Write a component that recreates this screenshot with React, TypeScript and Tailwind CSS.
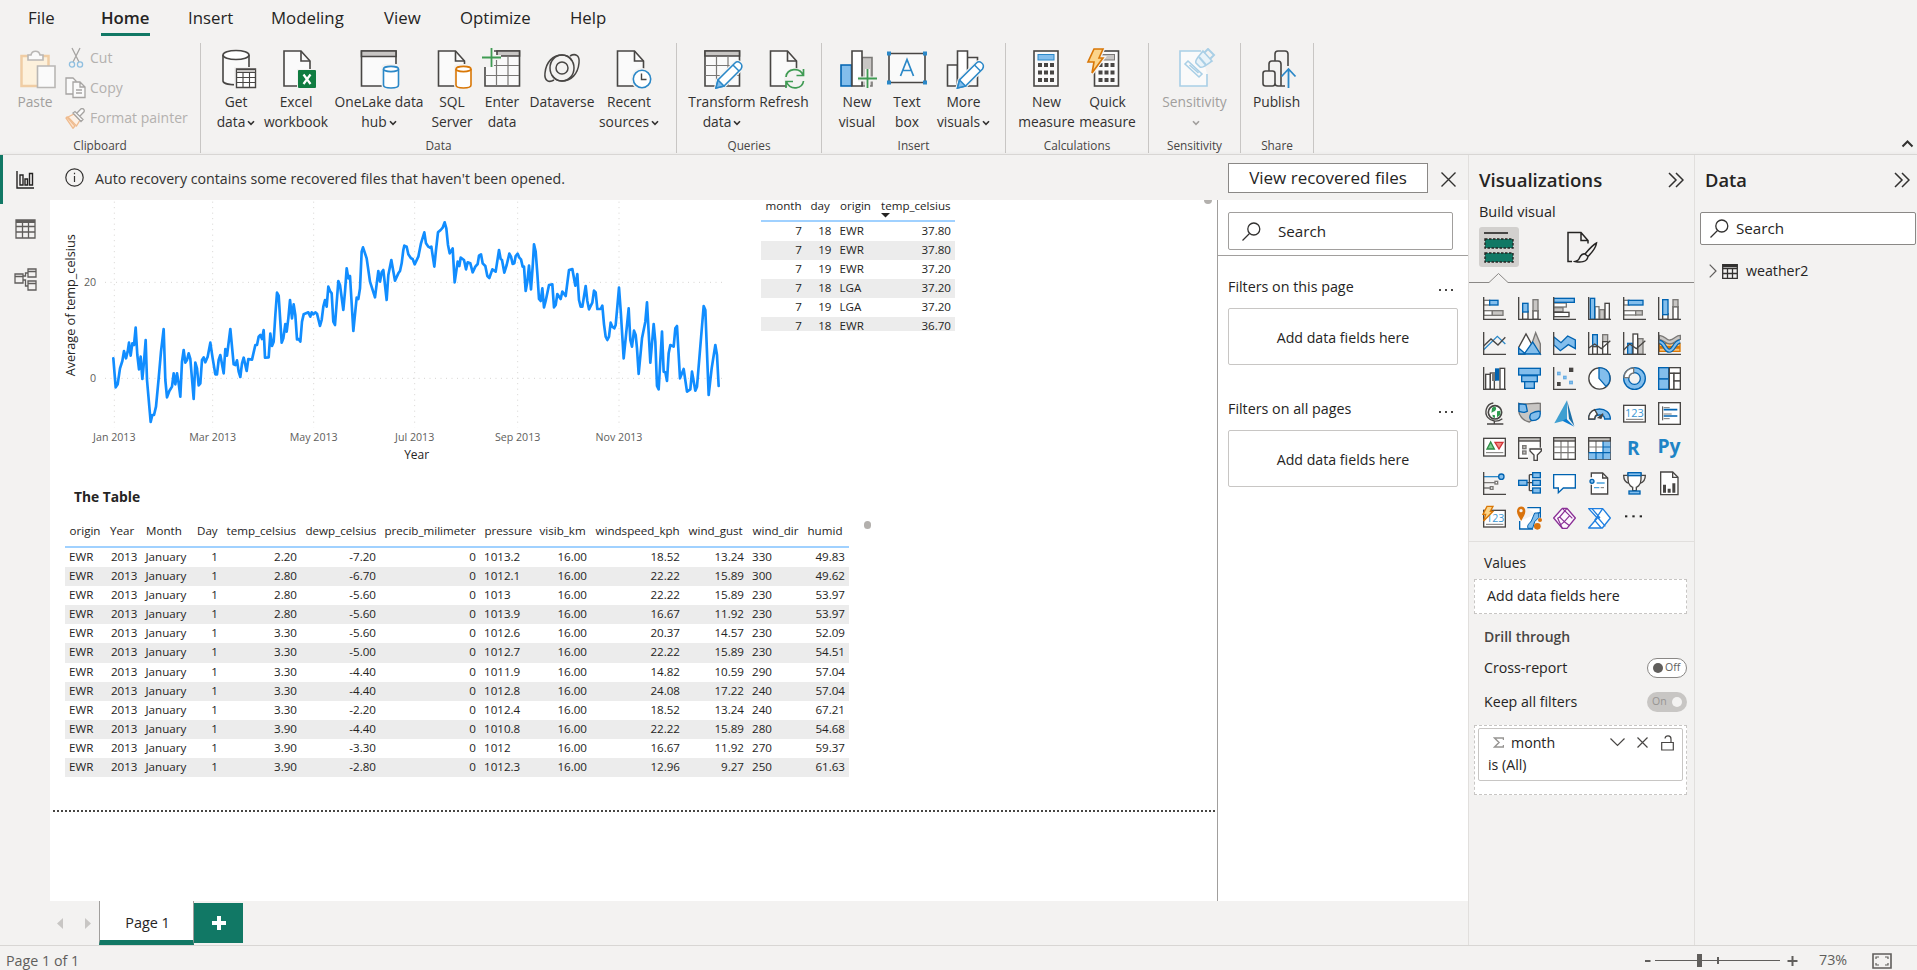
import React from "react";

type Kids = { children?: React.ReactNode };

const INK = "#484644";
const BLUE = "#2b88c8";
const FILL = "#83beec";
const DEEP = "#0063b1";
const GREY = "#7a7876";
const LGREY = "#c8c6c4";

/* ---------- ribbon ---------- */

function RibbonIcon({ x, w, children }: Kids & { x: number; w: number }) {
  return (
    <svg width={w} height={42} viewBox={`${x} 48 ${w} 42`} fill="none" stroke={INK} strokeWidth={1.6} className="block shrink-0">
      {children}
    </svg>
  );
}

function Caret({ dim }: { dim?: boolean }) {
  return (
    <svg width="8" height="6" viewBox="0 0 8 6" fill="none" stroke={dim ? "#a19f9d" : "#323130"} strokeWidth="1.6" className="ml-[2px] inline-block">
      <path d="M1 1.200 4 4.400 7 1.200" />
    </svg>
  );
}

function Item({ x, w, lines, caret, dim, children }: Kids & { x: number; w: number; lines: string[]; caret?: boolean; dim?: boolean }) {
  return (
    <div className="flex shrink-0 flex-col items-center" style={{ width: w }}>
      <RibbonIcon x={x} w={w}>{children}</RibbonIcon>
      <div className={`flex flex-col items-center pt-[2px] text-[13.800px] leading-[20px] whitespace-nowrap ${dim ? "text-[#a19f9d]" : "text-[#323130]"}`}>
        {lines.map((l, i) => (
          <span key={i} className="block h-[20px]">
            {l}
            {caret && i === lines.length - 1 && <Caret dim={dim} />}
          </span>
        ))}
      </div>
    </div>
  );
}

function Group({ w, pl, label, children }: Kids & { w: number; pl: number; label: string }) {
  return (
    <div className="flex h-[110px] shrink-0 flex-col border-r border-[#c8c6c4]" style={{ width: w }}>
      <div className="flex h-[95px] pt-[5px]" style={{ paddingLeft: pl }}>{children}</div>
      <div className="text-center text-[11.800px] leading-[16px] text-[#484644]">{label}</div>
    </div>
  );
}

function PageShape({ x }: { x: number }) {
  return (
    <>
      <path d={`M${x} 51h17l9 10v25h-26z`} fill="#fafafa" />
      <path d={`M${x + 17} 51v10h9`} />
    </>
  );
}

function Cylinder({ x, c }: { x: number; c: string }) {
  return (
    <g stroke={c}>
      <rect x={x - 2} y={64} width={20} height={25} rx={4} fill="#f3f2f1" stroke="none" />
      <path d={`M${x} 69v16c0 4 15 4 15 0v-16`} fill="#fff" />
      <ellipse cx={x + 7.5} cy={69} rx={7.5} ry={2.6} fill="#fff" />
    </g>
  );
}

function Pencil({ x }: { x: number }) {
  return (
    <g stroke={BLUE} strokeWidth={1.5}>
      <path d={`M${x} 88l2-8 17-17c3-3 9 1 6 6l-17 17z`} fill="#fff" stroke="#f3f2f1" strokeWidth={4} />
      <path d={`M${x} 88l2-8 17-17c3-3 9 1 6 6l-17 17z`} fill="#fff" />
      <path d={`M${x} 88l2-8 6 6z`} fill={FILL} />
      <path d={`M${x + 17} 65l6 6`} />
    </g>
  );
}

function Calculator({ x, screen, screenLine }: { x: number; screen: string; screenLine: string }) {
  return (
    <>
      <rect x={x} y={51} width={24} height={35} fill="#fafafa" />
      <rect x={x + 4} y={54.5} width={16} height={5.5} fill={screen} stroke={screenLine} strokeWidth={1} />
      {[63, 70.5, 78].map((y) => [4, 10, 16].map((d) => <rect key={`${y}-${d}`} x={x + d} y={y} width={4} height={4} fill={INK} stroke="none" />))}
    </>
  );
}

function Ribbon() {
  return (
    <div className="flex h-[111px]">
      <Group w={201} pl={8} label="Clipboard">
        <Item x={8} w={54} lines={["Paste"]} dim>
          <g strokeWidth={1.6}>
            <path d="M21.500 56h27v30h-27z" fill="#fdf1dc" stroke="#f0cda4" strokeWidth={2.500} />
            <path d="M28 60v-5h3c1-5 8-5 9 0h3v5z" fill="#fafafa" stroke="#b9b7b5" />
            <path d="M37.500 66h17.500v21.500h-17.500z" fill="#fafafa" stroke="#b9b7b5" />
          </g>
        </Item>
        <div className="-mt-[5px] flex flex-col text-[14px] leading-[30px] whitespace-nowrap text-[#b3b1af]">
          <div className="flex h-[30px] items-center gap-[4px] pl-[4px]">
            <svg width="20" height="22" viewBox="0 0 20 22" fill="none" stroke="#a6a4a2" strokeWidth="1.300">
              <path d="M6 1l7 14M14 1 7 15" />
              <circle cx="6" cy="17.500" r="2.600" stroke="#8fbfe0" />
              <circle cx="14" cy="17.500" r="2.600" stroke="#8fbfe0" />
            </svg>
            Cut
          </div>
          <div className="flex h-[30px] items-center gap-[4px] pl-[3px]">
            <svg width="21" height="22" viewBox="0 0 21 22" fill="#fafafa" stroke="#a6a4a2" strokeWidth="1.300">
              <path d="M1 1h7l3 3v13H1z" />
              <path d="M8 5h7l5 5v10.500H8zM15 5v5h5M11 13h6M11 16h6" />
            </svg>
            Copy
          </div>
          <div className="flex h-[30px] items-center gap-[4px] pl-[3px]">
            <svg width="21" height="21" viewBox="0 0 21 21" fill="#fafafa" stroke="#a6a4a2" strokeWidth="1.300">
              <path d="M2 9l8 9-2 2.300L1 10z" stroke="#efbb8e" fill="#fbe3cd" />
              <path d="M3 9l6-3 6 6-3.500 6z" stroke="#efbb8e" fill="#fdf1e6" />
              <path d="M8 5l2-1.500 8 8L16 13.500zM12 5l4-4.200c2-1 4 1 3 3L15 8" />
            </svg>
            Format painter
          </div>
        </div>
      </Group>
      <Group w={476} pl={7} label="Data">
        <Item x={208} w={56} lines={["Get", "data"]} caret>
          <path d="M223 55v26c0 5 26 5 26 0V55" fill="#fafafa" />
          <ellipse cx={236} cy={55} rx={13} ry={4.500} fill="#fff" />
          <path d="M234 67h24v23h-24z" fill="#f3f2f1" stroke="none" />
          <path d="M236.500 69h19v18.500h-19z" fill="#fff" strokeWidth={1.400} />
          <path d="M236.500 69.500h19v3h-19z" fill={LGREY} strokeWidth={1} />
          <path d="M243 73v14M249.500 73v14M237 77.500h18M237 82.500h18" strokeWidth={1.100} />
        </Item>
        <Item x={264} w={64} lines={["Excel", "workbook"]}>
          <PageShape x={284} />
          <rect x={297} y={69} width={20} height={20} fill="#f3f2f1" stroke="none" />
          <rect x={298} y={70} width={18} height={18} rx={1} fill="#107c41" stroke="none" />
          <path d="M303.500 74.500l7 9.500M310.500 74.500l-7 9.500" stroke="#fff" strokeWidth={2.200} />
        </Item>
        <Item x={328} w={102} lines={["OneLake data", "hub"]} caret>
          <path d="M361.500 51h34.500v35h-34.500z" fill="#fafafa" />
          <path d="M361.500 51h34.500v5.500h-34.500z" fill={LGREY} />
          <Cylinder x={383.500} c={BLUE} />
        </Item>
        <Item x={430} w={44} lines={["SQL", "Server"]}>
          <PageShape x={438.500} />
          <Cylinder x={456} c="#d97706" />
        </Item>
        <Item x={474} w={56} lines={["Enter", "data"]}>
          <path d="M485 51h34.500v35H485z" fill="#fafafa" />
          <path d="M497 51h22.500v5H497z" fill={LGREY} />
          <path d="M496.500 56v30M508 56v30M485 65.500h34M485 75.500h34" stroke={GREY} strokeWidth={1.200} />
          <path d="M480 48h14v19h-14z" fill="#f3f2f1" stroke="none" />
          <path d="M491.500 48v19M482 57.500h19" stroke="#f3f2f1" strokeWidth={5} />
          <path d="M491.500 48v19M482 57.500h19" stroke="#3f9b53" strokeWidth={1.800} />
        </Item>
        <Item x={530} w={64} lines={["Dataverse"]}>
          <path d="M554 80c-5 3-10 1-9-7 1-11 8-18 17-18 7 0 12 6 12 13s-5 13-12 13c-4 0-8-2-10-6" strokeWidth={1.500} />
          <path d="M570 56c5-3 10-1 9 7-1 11-8 18-17 18-7 0-12-6-12-13s5-13 12-13c4 0 8 2 10 6" strokeWidth={1.500} />
          <circle cx={562} cy={68} r={6} strokeWidth={1.500} />
        </Item>
        <Item x={594} w={70} lines={["Recent", "sources"]} caret>
          <PageShape x={617.500} />
          <circle cx={642} cy={79} r={11} fill="#f3f2f1" stroke="none" />
          <circle cx={642} cy={79} r={8.700} fill="#fff" stroke={BLUE} />
          <path d="M641.500 73.500v6h5" strokeWidth={1.400} />
        </Item>
      </Group>
      <Group w={145} pl={9} label="Queries">
        <Item x={686} w={72} lines={["Transform", "data"]} caret>
          <path d="M705 51h34.500v35H705z" fill="#fafafa" />
          <path d="M705 51h34.500v5H705z" fill={LGREY} />
          <path d="M716.500 56v30M728 56v30M705 65.500h34M705 75.500h34" stroke={GREY} strokeWidth={1.200} />
          <Pencil x={716} />
        </Item>
        <Item x={758} w={52} lines={["Refresh"]}>
          <PageShape x={770.500} />
          <circle cx={795} cy={79} r={11} fill="#f3f2f1" stroke="none" />
          <path d="M786 77c1-9 14-10 17-2M803.500 69v6.500h-7M803.500 81c-1 8-13 10-17 1M786 88v-6.500h7" stroke="#3f9b53" strokeWidth={1.700} />
        </Item>
      </Group>
      <Group w={184} pl={8} label="Insert">
        <Item x={830} w={54} lines={["New", "visual"]}>
          <path d="M841 65h10.500v21H841z" fill={FILL} stroke={DEEP} />
          <path d="M862 57.500h10V86h-10z" fill={LGREY} stroke={GREY} />
          <path d="M852 51h10v35h-10z" fill="#fff" />
          <path d="M867.500 69v20M858 79h19" stroke="#f3f2f1" strokeWidth={5} />
          <path d="M867.500 69v19M858 78.500h19" stroke="#3f9b53" strokeWidth={1.800} />
        </Item>
        <Item x={884} w={46} lines={["Text", "box"]}>
          <path d="M889 53.500h36v29h-36z" fill="#fafafa" />
          <path d="M900.500 76l6.500-16.500 6.500 16.500M903 70.500h8" stroke={BLUE} strokeWidth={1.700} />
          {[887, 923].map((x) => [51.500, 80.500].map((y) => <rect key={`${x}${y}`} x={x} y={y} width={4} height={4} fill={BLUE} stroke="none" />))}
        </Item>
        <Item x={930} w={67} lines={["More", "visuals"]} caret>
          <path d="M947.500 65h10v21h-10zM967 57.500h10.500V86H967z" fill="#fafafa" />
          <path d="M957.500 51h10v35h-10z" fill="#fff" />
          <Pencil x={957.500} />
        </Item>
      </Group>
      <Group w={143} pl={10} label="Calculations">
        <Item x={1016} w={61} lines={["New", "measure"]}>
          <Calculator x={1034} screen={FILL} screenLine={BLUE} />
        </Item>
        <Item x={1077} w={61} lines={["Quick", "measure"]}>
          <Calculator x={1094.500} screen={LGREY} screenLine={GREY} />
          <path d="M1094 49h9l-4 9h4l-11 15 2-11h-6z" fill="#fbd58b" stroke="#f3f2f1" strokeWidth={4} />
          <path d="M1094 49h9l-4 9h4l-11 15 2-11h-6z" fill="#fbd58b" stroke="#d97706" />
        </Item>
      </Group>
      <Group w={92} pl={10} label="Sensitivity">
        <Item x={1159} w={71} lines={["Sensitivity", ""]} caret dim>
          <g stroke="#a9cfe6">
            <path d="M1207 74v12h-27V51h21" fill="#fafafa" />
            <path d="M1185 64l3-3 14 13-3 3zM1189.500 65l9 8" />
            <path d="M1196 63c-2-3 5-9 7-12l9 10c-3 2-10 8-12 6z" fill="#e9f3f9" />
            <path d="M1204 53l4-4 6 6-4 4M1199 57l7 8" strokeWidth={2} />
          </g>
        </Item>
      </Group>
      <Group w={73} pl={7} label="Share">
        <Item x={1248} w={57} lines={["Publish"]}>
          <path d="M1275 61V54q0-3 3-3h7q3 0 3 3v13M1269 71v-7q0-3 3-3h6q3 0 3 3v22" />
          <rect x={1263} y={71} width={12} height={15} rx={2.500} />
          <path d="M1275 83.500q0 2.500 3 2.500h7" />
          <path d="M1288.500 66v23" stroke="#f3f2f1" strokeWidth={5} />
          <path d="M1288.500 88V69M1281.500 76.500l7-7.500 7 7.500" stroke={BLUE} strokeWidth={1.800} />
        </Item>
      </Group>
      <div className="flex flex-1 items-end justify-end pr-[3px] pb-[6px]">
        <svg width="13" height="8" viewBox="0 0 13 8" fill="none" stroke="#323130" strokeWidth="2">
          <path d="M1.500 6.500l5-5 5 5" />
        </svg>
      </div>
    </div>
  );
}

function Tabs() {
  const tabs: [string, number][] = [["File", 73], ["Home", 87], ["Insert", 83], ["Modeling", 113], ["View", 76], ["Optimize", 110], ["Help", 60]];
  return (
    <div className="flex h-[43px] pl-[28px] text-[16.800px] leading-[35px] text-[#252423]">
      {tabs.map(([t, w]) => (
        <div key={t} style={{ width: w }}>
          <span className={t === "Home" ? "inline-block h-[36px] border-b-[3px] border-[#117865] leading-[35px] font-semibold" : ""}>{t}</span>
        </div>
      ))}
    </div>
  );
}

/* ---------- report canvas ---------- */

const LINE =
  "190,490 197,577 203,568 210,520 217,498 222,468 228,490 233,470 237,443 242,482 247,445 252,450 257,398 262,480 267,523 272,485 277,552 282,500 287,435 291,555 302,681 307,660 312,660 318,635 326,550 333,470 341,402 346,555 351,607 358,588 366,575 371,535 376,568 381,535 386,565 391,605 396,500 401,465 406,503 411,495 416,475 421,492 431,612 436,503 441,520 446,571 451,565 456,495 461,487 466,502 473,485 481,443 488,490 496,538 501,538 506,495 511,480 521,535 526,462 531,482 541,402 551,508 556,510 561,496 566,530 571,546 576,505 581,488 590,528 595,492 606,494 616,450 621,450 626,425 631,420 636,432 641,405 645,488 656,487 661,416 666,453 671,440 676,360 681,293 686,302 695,443 700,430 706,387 710,410 715,370 720,315 726,370 731,328 736,360 741,433 746,432 751,440 756,380 761,358 775,352 781,365 785,352 790,358 796,352 801,356 810,393 815,375 820,335 825,315 830,335 835,275 840,288 845,295 850,380 855,390 865,258 870,270 880,345 885,290 890,220 895,250 900,243 910,408 920,308 925,312 930,280 935,170 939,157 950,190 960,260 975,307 985,228 990,260 995,232 1000,225 1010,315 1015,240 1024,195 1035,257 1045,235 1050,228 1055,205 1060,165 1063,152 1070,155 1075,178 1083,190 1088,192 1094,208 1105,185 1113,145 1123,112 1128,145 1135,155 1140,158 1144,155 1153,215 1158,165 1164,112 1172,105 1178,98 1184,82 1189,100 1194,150 1199,175 1208,160 1214,262 1223,200 1228,213 1232,188 1242,195 1248,223 1253,202 1261,205 1268,232 1276,215 1283,207 1287,182 1293,178 1298,205 1306,213 1312,243 1318,249 1327,223 1337,230 1347,165 1352,192 1356,195 1363,233 1370,210 1378,176 1383,185 1388,207 1393,205 1397,183 1403,176 1408,188 1413,193 1418,215 1422,215 1427,288 1432,260 1437,212 1443,283 1448,215 1452,148 1457,170 1462,235 1467,312 1472,318 1477,280 1482,337 1487,318 1497,270 1507,268 1512,337 1517,330 1522,297 1532,312 1537,290 1547,303 1557,225 1567,222 1576,272 1582,237 1587,315 1592,335 1597,335 1607,273 1612,318 1617,343 1627,323 1632,287 1637,292 1642,342 1652,342 1657,332 1662,388 1667,425 1672,435 1677,425 1682,383 1687,395 1693,400 1697,390 1702,335 1707,278 1712,345 1721,490 1736,340 1741,435 1746,455 1752,407 1757,420 1761,460 1766,537 1776,430 1786,380 1791,322 1801,503 1811,387 1816,440 1821,573 1826,583 1836,410 1841,530 1846,532 1851,558 1856,475 1861,450 1871,455 1876,400 1881,393 1890,550 1901,522 1911,590 1921,583 1926,530 1936,587 1941,575 1961,333 1966,345 1976,600 1985,520 1996,450 2001,480 2006,573";

function TempChart() {
  const months: [number, string][] = [[193, "Jan 2013"], [488, "Mar 2013"], [791, "May 2013"], [1094, "Jul 2013"], [1403, "Sep 2013"], [1707, "Nov 2013"]];
  return (
    <svg width="711" height="265" viewBox="0 15 2133 795" className="block shrink-0">
      <g stroke="#d6d4d2" strokeWidth="3" strokeDasharray="3 13.500">
        {months.map(([x]) => <path key={x} d={`M${x} 20V697`} />)}
        <path d="M165 262H2026M165 550H2026" />
      </g>
      <polyline points={LINE} fill="none" stroke="#118dff" strokeWidth="8" strokeLinejoin="round" strokeLinecap="round" />
      <g fill="#605e5c" fontSize="32" textAnchor="middle">
        {months.map(([x, t]) => <text key={t} x={x} y="738">{t}</text>)}
        <text x="120" y="272">20</text>
        <text x="129" y="561">0</text>
      </g>
      <g fill="#252423" textAnchor="middle">
        <text x="1100" y="791" fontSize="36">Year</text>
        <text transform="translate(75 331) rotate(-90)" fontSize="38">Average of temp_celsius</text>
      </g>
    </svg>
  );
}

type Col = { name: string; w: number; left?: boolean };

function DataTable({ cols, rows, cut }: { cols: Col[]; rows: string[][]; cut?: boolean }) {
  return (
    <>
      {rows.map((r, i) => (
        <div key={i} className={`flex ${cut && i === rows.length - 1 ? "h-[14px]" : "h-[19.1px]"} ${i % 2 ? "bg-[#ececec]" : "bg-white"}`}>
          {r.map((v, j) => (
            <div key={j} style={{ width: cols[j].w }} className={`shrink-0 pr-[4px] pl-[4px] text-[11.600px] leading-[18px] whitespace-nowrap text-[#252423] ${cols[j].left ? "text-left" : "text-right"}`}>
              {v}
            </div>
          ))}
        </div>
      ))}
    </>
  );
}

function HeaderRow({ cols }: { cols: Col[] }) {
  return (
    <div className="flex text-[11.600px] leading-[16px] text-[#252423]">
      {cols.map((c) => (
        <div key={c.name} style={{ width: c.w }} className="shrink-0 pl-[4.500px] whitespace-nowrap">{c.name}</div>
      ))}
    </div>
  );
}

const TOP_COLS: Col[] = [{ name: "month", w: 45 }, { name: "day", w: 29.500 }, { name: "origin", w: 41, left: true }, { name: "temp_celsius", w: 78.500 }];
const TOP_ROWS = [
  ["7", "18", "EWR", "37.80"],
  ["7", "19", "EWR", "37.80"],
  ["7", "19", "EWR", "37.20"],
  ["7", "18", "LGA", "37.20"],
  ["7", "19", "LGA", "37.20"],
  ["7", "18", "EWR", "36.70"],
];

const MAIN_COLS: Col[] = [
  { name: "origin", w: 40.500, left: true },
  { name: "Year", w: 36 },
  { name: "Month", w: 51, left: true },
  { name: "Day", w: 29.500 },
  { name: "temp_celsius", w: 79 },
  { name: "dewp_celsius", w: 79 },
  { name: "precib_milimeter", w: 100 },
  { name: "pressure", w: 55, left: true },
  { name: "visib_km", w: 56 },
  { name: "windspeed_kph", w: 93 },
  { name: "wind_gust", w: 64 },
  { name: "wind_dir", w: 55, left: true },
  { name: "humid", w: 46 },
];
const MAIN_ROWS = [
  ["2.20", "-7.20", "1013.2", "18.52", "13.24", "330", "49.83"],
  ["2.80", "-6.70", "1012.1", "22.22", "15.89", "300", "49.62"],
  ["2.80", "-5.60", "1013", "22.22", "15.89", "230", "53.97"],
  ["2.80", "-5.60", "1013.9", "16.67", "11.92", "230", "53.97"],
  ["3.30", "-5.60", "1012.6", "20.37", "14.57", "230", "52.09"],
  ["3.30", "-5.00", "1012.7", "22.22", "15.89", "230", "54.51"],
  ["3.30", "-4.40", "1011.9", "14.82", "10.59", "290", "57.04"],
  ["3.30", "-4.40", "1012.8", "24.08", "17.22", "240", "57.04"],
  ["3.30", "-2.20", "1012.4", "18.52", "13.24", "240", "67.21"],
  ["3.90", "-4.40", "1010.8", "22.22", "15.89", "280", "54.68"],
  ["3.90", "-3.30", "1012", "16.67", "11.92", "270", "59.37"],
  ["3.90", "-2.80", "1012.3", "12.96", "9.27", "250", "61.63"],
].map((r) => ["EWR", "2013", "January", "1", r[0], r[1], "0", r[2], "16.00", r[3], r[4], r[5], r[6]]);

function Canvas() {
  return (
    <div className="flex w-[1167px] shrink-0 flex-col bg-white">
      <div className="flex h-[265px]">
        <TempChart />
        <div className="w-[194px]">
          <div className="h-[22px]">
            <div className="-mt-[2px]"><HeaderRow cols={TOP_COLS} /></div>
            <svg width="9" height="5" viewBox="0 0 9 5" className="-mt-px ml-[119.500px] block"><path d="M0 0h9L4.500 4.500z" fill="#252423" /></svg>
          </div>
          <div className="h-[2px] bg-[#a0d1ff]" />
          <DataTable cols={TOP_COLS} rows={TOP_ROWS} cut />
        </div>
        <div className="h-[4px] flex-1 overflow-hidden">
          <div className="mt-[-4px] mr-[5px] ml-auto h-[8px] w-[8px] rounded-full bg-[#b3b0ad]" />
        </div>
      </div>
      <div className="pt-[22px] pl-[24px] text-[13.800px] leading-[20px] font-bold text-[#252423]">The Table</div>
      <div className="flex pt-[16px] pl-[15px]">
        <div className="w-[784px] shrink-0">
          <HeaderRow cols={MAIN_COLS} />
          <div className="mt-[7px] h-[2px] bg-[#a0d1ff]" />
          <DataTable cols={MAIN_COLS} rows={MAIN_ROWS} />
        </div>
        <div className="mt-[-2px] ml-[15px] h-[8px] w-[7px] rounded-full bg-[#b3b0ad]" />
      </div>
      <div className="mt-[33.300px] mr-[2px] ml-[3px] border-t-2 border-dotted border-[#484644]" />
    </div>
  );
}

/* ---------- filter pane ---------- */

function Magnifier() {
  return (
    <svg width="19" height="19" viewBox="0 0 19 19" fill="none" stroke="#323130" strokeWidth="1.300">
      <circle cx="11.800" cy="7" r="6" />
      <path d="M7.500 11.500.5 18.500" />
    </svg>
  );
}

function FilterPane() {
  const section = (t: string) => (
    <>
      <div className="flex h-[20px] items-center justify-between text-[14.300px] leading-[20px] text-[#252423]">
        <span>{t}</span>
        <svg width="14" height="3" viewBox="0 0 14 3" className="mt-[6px] mr-[5px]" fill="#484644">
          <rect x="0" y="0" width="2" height="2" /><rect x="6" y="0" width="2" height="2" /><rect x="12" y="0" width="2" height="2" />
        </svg>
      </div>
      <div className="mt-[11px] flex h-[57px] items-center justify-center rounded-[2px] border border-[#c8c6c4] pt-[2px] text-[14.200px] text-[#252423]">Add data fields here</div>
    </>
  );
  return (
    <div className="flex w-[251px] flex-col border-l border-[#a19f9d] bg-white">
      <div className="border-b border-[#a19f9d] pt-[12px] pr-[15px] pb-[5px] pl-[10px]">
        <div className="flex h-[38px] items-center rounded-[2px] border border-[#a19f9d] pl-[13px] text-[15.200px] text-[#252423]">
          <Magnifier />
          <span className="ml-[17px]">Search</span>
        </div>
      </div>
      <div className="flex flex-col pt-[21px] pr-[10px] pl-[10px]">
        {section("Filters on this page")}
        <div className="h-[34px]" />
        {section("Filters on all pages")}
      </div>
    </div>
  );
}

/* ---------- visualization gallery, 69-unit grid per glyph ---------- */

const axis = <path d="M2 0v67h67" stroke={INK} strokeWidth={4} fill="none" />;
const wht = "#fff";
const R = (x: number, y: number, w: number, h: number, f: string, s: string, k?: number) => (
  <rect key={k} x={x} y={y} width={w} height={h} fill={f} stroke={s} strokeWidth={4} />
);

const GLYPHS: React.ReactNode[] = [
  <>{R(2, 10, 18, 14, wht, GREY)}{R(20, 10, 25, 14, FILL, DEEP)}{R(2, 41, 26, 14, wht, GREY)}{R(28, 41, 32, 14, LGREY, GREY)}{axis}</>,
  <>{R(14, 43, 16, 24, wht, INK)}{R(14, 19, 16, 26, FILL, DEEP)}{R(45, 41, 15, 26, wht, INK)}{R(45, 8, 15, 33, LGREY, GREY)}{axis}</>,
  <>{R(2, 18, 38, 12, wht, GREY)}{R(2, 32, 28, 12, LGREY, GREY)}{R(2, 46, 46, 13, wht, INK)}{R(2, 4, 62, 12, FILL, DEEP)}{axis}</>,
  <>{R(21, 29, 12, 38, wht, GREY)}{R(35, 38, 14, 29, LGREY, GREY)}{R(51, 19, 13, 48, wht, INK)}{R(7, 4, 13, 63, FILL, DEEP)}{axis}</>,
  <>{R(2, 10, 16, 14, wht, GREY)}{R(16, 10, 44, 14, FILL, DEEP)}{R(2, 41, 36, 13, wht, GREY)}{R(38, 41, 20, 13, LGREY, GREY)}{axis}</>,
  <>{R(14, 50, 16, 17, wht, INK)}{R(14, 8, 16, 45, FILL, DEEP)}{R(45, 29, 15, 38, wht, INK)}{R(45, 8, 15, 21, LGREY, GREY)}{axis}</>,
  <><path d="M2 53 43 13l24 23" stroke={BLUE} strokeWidth={4} fill="none" /><path d="M2 42 24 21l21 18L67 16" stroke={INK} strokeWidth={4} fill="none" />{axis}</>,
  <><path d="M2 66V46L24 6l21 38-24 22z" fill={wht} stroke={INK} strokeWidth={4} /><path d="M53 2 67 36v30L40 40z" fill={LGREY} stroke={GREY} strokeWidth={4} /><path d="M2 48 20 64l24-34 23 36H2z" fill={FILL} stroke={DEEP} strokeWidth={4} /></>,
  <><path d="M2 14 24 32 44 12 67 24V50L46 38 22 56 2 38z" fill={FILL} stroke={DEEP} strokeWidth={4} />{axis}</>,
  <>{R(14, 8, 14, 46, FILL, DEEP)}{R(14, 44, 14, 23, wht, INK)}{R(44, 8, 15, 22, LGREY, GREY)}{R(44, 29, 15, 38, wht, INK)}<path d="M2 48 20 36l20 14L67 26" stroke={INK} strokeWidth={4} fill="none" />{axis}</>,
  <>{R(14, 34, 14, 33, FILL, DEEP)}{R(44, 20, 16, 47, LGREY, GREY)}{R(30, 6, 14, 61, wht, INK)}<path d="M2 54 20 36l20 14L67 26" stroke={INK} strokeWidth={4} fill="none" />{axis}</>,
  <><path d="M4 34h62v10H4zM4 48h62v10H4z" fill="#f8c27a" stroke="#d97706" strokeWidth={4} /><path d="M4 10c20 2 20 16 32 14S54 10 67 10v12c-14 2-18 14-31 14S16 24 4 22z" fill={LGREY} stroke={GREY} strokeWidth={4} /><path d="M4 30c16 0 16 26 30 26s14-24 32-28" stroke={DEEP} strokeWidth={13} fill="none" /><path d="M4 30c16 0 16 26 30 26s14-24 32-28" stroke={FILL} strokeWidth={6} fill="none" />{axis}</>,
  <>{R(8, 22, 14, 45, wht, INK)}{R(22, 18, 12, 49, wht, INK)}{R(29, 20, 9, 20, GREY, GREY)}{R(38, 6, 9, 33, DEEP, DEEP)}{R(51, 4, 14, 63, wht, INK)}{axis}</>,
  <>{R(2, 4, 65, 20, FILL, DEEP)}{R(11, 26, 47, 18, FILL, DEEP)}{R(20, 44, 29, 20, FILL, DEEP)}</>,
  <>{R(14, 16, 7, 7, FILL, "#6aaee3")}{R(32, 28, 7, 7, FILL, "#6aaee3")}{R(50, 43, 8, 7, FILL, "#6aaee3")}{R(50, 4, 9, 9, INK, INK)}{R(14, 47, 7, 8, INK, INK)}{axis}</>,
  <><circle cx={34.500} cy={34.500} r={32} fill={wht} stroke={INK} strokeWidth={4} /><path d="M33 2v32L54 58C72 44 72 4 33 2z" fill={FILL} stroke={DEEP} strokeWidth={4} /></>,
  <><circle cx={34.500} cy={34.500} r={25} fill="none" stroke={DEEP} strokeWidth={19} /><circle cx={34.500} cy={34.500} r={25} fill="none" stroke={FILL} strokeWidth={11} /><path d="M3 32C4 14 18 3 32 3v15c-7 0-14 6-14 14z" fill={wht} stroke={GREY} strokeWidth={4} /></>,
  <>{R(2, 2, 30, 34, FILL, DEEP)}{R(2, 36, 30, 31, FILL, DEEP)}{R(34, 2, 33, 17, wht, INK)}{R(34, 19, 14, 48, wht, INK)}{R(48, 19, 19, 23, wht, INK)}{R(48, 42, 19, 25, wht, INK)}</>,
  <><circle cx={36} cy={31} r={20} fill={wht} stroke={INK} strokeWidth={5} /><path d="M27 18c8-6 14-4 12 4s-10 6-14 12zM42 28l10-2v12l-10 8zM28 38l8 2v8l-6-2z" fill="#2e9b4f" /><path d="M31 3C8 6 4 34 14 46s28 16 44 4M34 58v8M12 66h49" stroke={INK} strokeWidth={4} fill="none" /></>,
  <><path d="M2 4c20 5 44-2 65 0v24L56 44 34 60C14 56 2 40 2 24z" fill={LGREY} stroke={GREY} strokeWidth={4} /><path d="M3 5c8 3 14 0 21 3l4 20c-8 6-18 2-25 0zM38 36c8-4 12-10 28-8 4 20-8 28-24 28-8-4-8-12-4-20z" fill={FILL} stroke={DEEP} strokeWidth={4} /></>,
  <><path d="M42 -5 4 64 42 54z" fill="#3f9fd1" /><path d="M42 -5 48 50 64 72z" fill="#1b6fa8" /><path d="M40 50 28 56 64 74z" fill="#0a7bd0" /></>,
  <><path d="M2 51C2 11 67 11 67 51H50c0-16-30-16-30 0z" fill={FILL} stroke={DEEP} strokeWidth={4} /><path d="M2 51C2 37 10 27 20 23l8 14q-8 4-8 14z" fill={wht} stroke={INK} strokeWidth={4} /><path d="M31 47l14-12-6 14z" fill={INK} stroke={INK} strokeWidth={4} /></>,
  <>{R(2, 10, 65, 50, wht, INK)}<text x={34} y={45} fontSize={33} textAnchor="middle" fill="#3c97d3">123</text><path d="M9 52h52" stroke={GREY} strokeWidth={3} /></>,
  <>{R(2, 2, 65, 65, wht, INK)}<path d="M14 13v42" stroke={INK} strokeWidth={3} /><path d="M17 17h18M17 36h24M17 50h18" stroke={GREY} strokeWidth={3} /><path d="M17 23h41M17 42h41" stroke={DEEP} strokeWidth={5} /></>,
  <>{R(2, 4, 65, 53, wht, INK)}<path d="M12 36 23 15l11 21z" fill="#7ccf8f" stroke="#2e8b45" strokeWidth={4} /><path d="M36 16h24L48 36z" fill="#f28b82" stroke="#d13438" strokeWidth={4} /><path d="M9 47h52" stroke={GREY} strokeWidth={3} /></>,
  <>{R(2, 2, 65, 62, wht, INK)}{R(2, 2, 65, 10, LGREY, INK)}{R(14, 26, 10, 9, LGREY, GREY)}{R(14, 42, 10, 9, LGREY, GREY)}<path d="M30 32h44v44H30z" fill="#f3f2f1" /><path d="M36 36h34v6L58 54v16H48V54L36 42z" fill={wht} stroke={INK} strokeWidth={4} /></>,
  <>{R(2, 2, 65, 65, wht, INK)}<path d="M24 12v54M45 12v54M2 30h65M2 47h65" stroke={GREY} strokeWidth={3.500} />{R(2, 2, 65, 10, LGREY, INK)}</>,
  <>{R(2, 2, 65, 65, wht, INK)}<path d="M45 12h22v55H2V47h43z" fill={FILL} /><path d="M24 12v36M2 30h43" stroke={GREY} strokeWidth={3.500} /><path d="M45 12v55M24 47v20M2 47h65M45 30h22" stroke={DEEP} strokeWidth={3.500} />{R(2, 2, 65, 10, LGREY, INK)}</>,
  <text x={31} y={54} fontSize={57} fontWeight={700} textAnchor="middle" fill="#1f84c6">R</text>,
  <text x={33} y={49} fontSize={58} fontWeight={700} textAnchor="middle" fill="#1f84c6">Py</text>,
  <><path d="M2 14h46" stroke={BLUE} strokeWidth={4} /><circle cx={55} cy={14} r={8} fill={FILL} stroke={DEEP} strokeWidth={4} /><path d="M2 32h34M2 48h20" stroke={GREY} strokeWidth={4} />{R(36, 28, 8, 8, wht, GREY)}{R(22, 44, 8, 8, wht, GREY)}{axis}</>,
  <><path d="M26 32h20M34 8v48M34 8h12M34 56h12" stroke={INK} strokeWidth={4} fill="none" />{R(2, 25, 25, 15, FILL, DEEP)}{R(44, 2, 23, 15, FILL, DEEP)}{R(44, 25, 23, 15, FILL, DEEP)}{R(44, 48, 23, 15, FILL, DEEP)}</>,
  <path d="M2 8h65v40H31L16 62V48H2z" fill={wht} stroke={DEEP} strokeWidth={4} />,
  <><path d="M10 16V3h34l15 15v48H10V38" fill={wht} stroke={INK} strokeWidth={4} /><path d="M44 3v15h15" fill="none" stroke={INK} strokeWidth={4} /><circle cx={12} cy={28} r={6} fill={FILL} stroke={DEEP} strokeWidth={4} /><path d="M26 33h24M18 47h16" stroke="#4ba3dc" strokeWidth={4} /><path d="M38 47h10" stroke={GREY} strokeWidth={3} /></>,
  <><path d="M14 10H2c0 16 6 22 16 24M54 10h13c0 16-8 22-16 24" fill="none" stroke={INK} strokeWidth={4} /><path d="M15 4h39v18c0 20-14 24-14 24v10H29V46S15 42 15 22z" fill={wht} stroke={INK} strokeWidth={4} />{R(15, 2, 39, 9, FILL, DEEP)}{R(18, 57, 33, 9, FILL, DEEP)}</>,
  <><path d="M8 0h36l16 16v52H8z" fill={wht} stroke={INK} strokeWidth={4} /><path d="M44 0v16h16" fill="none" stroke={INK} strokeWidth={4} /><path d="M15 38h9v24h-9zM29 50h9v12h-9zM43 34h9v28h-9z" fill={INK} /></>,
  <>{R(2, 10, 65, 50, wht, INK)}<text x={37} y={44} fontSize={32} textAnchor="middle" fill="#3c97d3">123</text><path d="M9 52h52" stroke={GREY} strokeWidth={3} /><path d="M12-2h18l-8 15h8L2 42l6-20H0z" fill="#fbd58b" stroke="#d97706" strokeWidth={4} /></>,
  <><path d="M28 2h39v30M5 42v24h38L38 46l14-6 4-20 11-4M43 66l-10-14" fill={wht} stroke={DEEP} strokeWidth={4} /><path d="M50 18h12v14L50 44l-6 20H30c-4-10 4-14 10-22z" fill={FILL} stroke={DEEP} strokeWidth={3} /><path d="M9 41C4 30-4 22-3 12-2-6 22-6 22 12c0 10-6 18-12 29z" fill="#d9730d" /><circle cx={9} cy={11} r={5} fill="#f3f2f1" /><circle cx={66} cy={39} r={6} fill="#d9730d" /><circle cx={58} cy={58} r={10} fill="#d9730d" /></>,
  <g fill="#fdf7fd" stroke="#8a2f96" strokeWidth={4} strokeLinejoin="round"><path d="M28 4h14L67 33 42 64H28L2 33z" /><path d="M28 4 50 26 34 44 20 30 42 4M20 30 14 34 28 64M34 44 20 56M34 44 50 56M50 26 58 34" fill="none" strokeWidth={3.500} /></g>,
  <g fill="#fff" stroke="#1f7fe0" strokeWidth={4} strokeLinejoin="round"><path d="M2 5h42l23 28-24 30H2l26-30z" /><path d="M12 5 36 33M44 5 20 40M28 30 52 58M20 40 40 63" fill="none" /></g>,
];

function Gallery() {
  return (
    <div className="grid grid-cols-[repeat(6,23px)] gap-[12px] pt-[14px] pl-[14px]">
      {GLYPHS.map((g, i) => (
        <svg key={i} width="23" height="23" viewBox="0 0 69 69" className="block overflow-visible">{g}</svg>
      ))}
      <svg width="23" height="23" viewBox="0 0 69 69" className="block overflow-visible" fill="#252423">
        <rect x="6" y="25" width="7" height="6" /><rect x="28" y="25" width="7" height="6" /><rect x="50" y="25" width="7" height="6" />
      </svg>
    </div>
  );
}

function Expand() {
  return (
    <svg width="16" height="16" viewBox="0 0 16 16" fill="none" stroke="#323130" strokeWidth="1.500">
      <path d="M1 1l7 7-7 7M8 1l7 7-7 7" />
    </svg>
  );
}

function VizPane() {
  return (
    <div className="flex w-[227px] shrink-0 flex-col border-r border-l border-[#e1dfdd] bg-[#f3f2f1] text-[#252423]">
      <div className="flex h-[49px] items-center justify-between pr-[10px] pl-[10px]">
        <span className="text-[18.600px] font-semibold">Visualizations</span>
        <Expand />
      </div>
      <div className="h-[22px] pl-[10px] text-[14.500px] leading-[16px]">Build visual</div>
      <div className="flex h-[46px] pl-[10px]">
        <div className="mt-px flex h-[40px] w-[40px] items-center justify-center rounded-[3px] bg-[#d2d0ce]">
          <svg width="30" height="31" viewBox="0 0 30 31">
            <path d="M0 1h24" stroke="#252423" strokeWidth="1.600" />
            <g fill="#117865" stroke="#252423" strokeWidth="1.400" strokeDasharray="2.500 1.500">
              <rect x="1" y="7" width="28" height="9" /><rect x="1" y="21" width="28" height="9" />
            </g>
          </svg>
        </div>
        <svg width="32" height="32" viewBox="0 0 32 32" className="mt-[5px] ml-[47px]" fill="none" stroke="#252423" strokeWidth="1.500">
          <path d="M6 30.500H2V1.500h13l7 8v3M15 1.500v8h7" />
          <path d="M30.500 12c-4 2-9 8-11.500 11l3 2.500c3-3 8-9 8.500-13.500zM19 23c-4-1-5 3-6 5s-3 2-4 2.500c5 1 12 1 13-5" />
        </svg>
      </div>
      <svg width="225" height="11" viewBox="0 0 225 11" className="block" fill="none" stroke="#8a8886">
        <path d="M0 10.500h20l9.500-9 9.500 9h186" />
      </svg>
      <Gallery />
      <div className="mt-[11px] border-t border-[#e1dfdd] pt-[10.500px]">
        <div className="pl-[15px] text-[13.800px] leading-[20px]">Values</div>
        <div className="mt-[6px] mr-[7px] ml-[5px] flex h-[35px] items-center border border-dashed border-[#c8c6c4] bg-white pl-[12px] text-[14.200px]">Add data fields here</div>
        <div className="pt-[13px] pl-[15px] text-[14px] leading-[20px] font-semibold text-[#484644]">Drill through</div>
        <div className="flex h-[31px] items-center justify-between pt-[12px] pr-[7px] pl-[15px] text-[14.200px]">
          Cross-report
          <span className="flex h-[20px] w-[40px] items-center rounded-full border border-[#8a8886] bg-white pl-[5px] text-[10.500px] text-[#605e5c]">
            <i className="mr-[2px] block h-[10px] w-[10px] rounded-full bg-[#605e5c]" />Off
          </span>
        </div>
        <div className="mt-[3px] flex h-[31px] items-center justify-between pt-[12px] pr-[7px] pl-[15px] text-[14.200px]">
          Keep all filters
          <span className="flex h-[20px] w-[40px] items-center rounded-full bg-[#c8c6c4] pl-[5px] text-[10.500px] text-[#979593]">
            On<i className="ml-[5px] block h-[10px] w-[10px] rounded-full bg-[#f3f2f1]" />
          </span>
        </div>
        <div className="mt-[13px] mr-[7px] ml-[5px] h-[70px] border border-dashed border-[#c8c6c4] bg-white pt-[2px] pr-[3px] pl-[3px]">
          <div className="h-[53px] rounded-[2px] border border-[#c8c6c4] pl-[9px] text-[14.200px] leading-[22px]">
            <div className="flex h-[26px] items-center pt-[2px] pr-[8px]">
              <svg width="11" height="11" viewBox="0 0 11 11" fill="none" stroke="#979593" strokeWidth="1.500" className="ml-[5px]">
                <path d="M10.500 3V1H1.500L6 5.500 1.500 10h9V8" />
              </svg>
              <span className="ml-[7px] flex-1">month</span>
              <svg width="15" height="9" viewBox="0 0 15 9" fill="none" stroke="#484644" strokeWidth="1.200"><path d="M.5.500l7 7 7-7" /></svg>
              <svg width="11" height="11" viewBox="0 0 11 11" fill="none" stroke="#484644" strokeWidth="1.200" className="ml-[12px]"><path d="M.5.500l10 10M10.500.500l-10 10" /></svg>
              <svg width="13" height="16" viewBox="0 0 13 16" fill="none" stroke="#484644" strokeWidth="1.200" className="ml-[13px]"><path d="M.7 7.500h11.600v7.500H.7zM10 7.500V4c0-4-5.500-4-6-.5" /></svg>
            </div>
            <div className="h-[20px] leading-[20px]">is (All)</div>
          </div>
        </div>
      </div>
    </div>
  );
}

function DataPane() {
  return (
    <div className="flex flex-1 flex-col bg-[#f3f2f1] text-[#252423]">
      <div className="flex h-[49px] items-center justify-between pr-[7px] pl-[10px]">
        <span className="text-[18.300px] font-semibold">Data</span>
        <Expand />
      </div>
      <div className="mt-[8px] mr-px ml-[5px] flex h-[33px] items-center rounded-[2px] border border-[#8a8886] bg-white pl-[9px] text-[15.200px]">
        <Magnifier />
        <span className="ml-[7px]">Search</span>
      </div>
      <div className="flex h-[52px] items-center pl-[14px] text-[14.200px]">
        <svg width="8" height="14" viewBox="0 0 8 14" fill="none" stroke="#605e5c" strokeWidth="1.200"><path d="M.7.700 7 7 .7 13.300" /></svg>
        <svg width="16" height="15" viewBox="0 0 16 15" fill="none" stroke="#323130" strokeWidth="1.300" className="ml-[5px]">
          <path d="M.7.700h14.600v13.600H.7zM.7 4.500h14.600M.7 9.500h14.600M5.500 4v10M10.500 4v10" /><path d="M.7 2h14.600" strokeWidth="2.400" />
        </svg>
        <span className="ml-[8px]">weather2</span>
      </div>
    </div>
  );
}

/* ---------- chrome ---------- */

function ViewRail() {
  return (
    <div className="flex w-[50px] shrink-0 flex-col bg-[#f3f2f1]">
      <div className="flex h-[49px] items-center border-l-[3px] border-[#117865] pl-[13px]">
        <svg width="18" height="18" viewBox="0 0 18 18" fill="none" stroke="#252423" strokeWidth="1.400">
          <path d="M1 0v17h17" /><path d="M4 4h3v10H4zM9 8h2.500v6H9zM13.500 2.500h3V14h-3z" />
        </svg>
      </div>
      <div className="flex h-[50px] items-center pl-[15px]">
        <svg width="21" height="20" viewBox="0 0 21 20" fill="none" stroke="#605e5c" strokeWidth="1.300">
          <path d="M1 1h19v18H1zM1 7.500h19M1 13h19M7.500 4v15M13.500 4v15" /><path d="M1 2.500h19" strokeWidth="3" />
        </svg>
      </div>
      <div className="flex h-[50px] items-center pl-[14px]">
        <svg width="23" height="23" viewBox="0 0 23 23" fill="none" stroke="#605e5c" strokeWidth="1.300">
          <path d="M1 6h8v9H1zM1 8.500h8M14 1h8v8h-8zM14 3.500h8M14 13h8v9h-8zM14 15.500h8M9 8h2.500V5H14M9 12h2.500v6H14" />
        </svg>
      </div>
    </div>
  );
}

function RecoveryBar() {
  return (
    <div className="flex h-[45px] items-center bg-[#f3f2f1] pl-[15px] text-[#323130]">
      <svg width="19" height="19" viewBox="0 0 19 19" fill="none" stroke="#323130" strokeWidth="1.200">
        <circle cx="9.500" cy="9.500" r="8.700" /><path d="M9.500 8v6M9.500 4.700v1.500" />
      </svg>
      <span className="ml-[11px] flex-1 pt-[2px] text-[14.200px]">Auto recovery contains some recovered files that haven't been opened.</span>
      <div className="flex h-[30px] w-[200px] items-center justify-center border border-[#8a8886] bg-white text-[17px] text-[#252423]">View recovered files</div>
      <svg width="15" height="15" viewBox="0 0 15 15" fill="none" stroke="#323130" strokeWidth="1.400" className="mt-[4px] mr-[12px] ml-[13px]">
        <path d="M.5.500l14 14M14.500.500l-14 14" />
      </svg>
    </div>
  );
}

function PageTabs() {
  return (
    <div className="flex h-[44px] bg-[#f3f2f1]">
      <div className="flex w-[49px] items-center justify-between pr-[8px] pl-[7px]">
        <svg width="6" height="11" viewBox="0 0 6 11" fill="#c8c6c4"><path d="M6 0v11L0 5.500z" /></svg>
        <svg width="6" height="11" viewBox="0 0 6 11" fill="#c8c6c4"><path d="M0 0v11l6-5.500z" /></svg>
      </div>
      <div className="flex w-[95px] items-center justify-center border-r border-b-[5px] border-l border-r-[#a19f9d] border-b-[#117865] border-l-[#a19f9d] bg-white pt-[4px] pl-[2px] text-[14.400px] font-medium text-[#252423]">Page 1</div>
      <div className="mt-[2px] flex h-[40px] w-[49px] items-center justify-center bg-[#117865]">
        <svg width="14" height="14" viewBox="0 0 14 14" fill="#fff"><path d="M5 0h4v5h5v4H9v5H5V9H0V5h5z" /></svg>
      </div>
    </div>
  );
}

function StatusBar() {
  return (
    <div className="flex h-[25px] shrink-0 items-start border-t border-[#d8d6d4] bg-[#f3f2f1] pl-[6px] text-[14.300px] leading-[20px] text-[#605e5c]">
      <span className="flex-1 pt-[5px]">Page 1 of 1</span>
      <svg width="155" height="22" viewBox="1645 946 155 22" className="block" fill="#605e5c">
        <path d="M1644.500 960h6v2h-6zM1655 960h125v1h-125zM1697 954h5v13h-5zM1717 957h2v7h-2zM1787.500 960h10v2h-10zM1791.500 956h2v10h-2z" />
      </svg>
      <span className="ml-[19px] w-[53px] pt-[4px]">73%</span>
      <svg width="20" height="16" viewBox="0 0 20 16" fill="none" stroke="#605e5c" className="mt-[7px] mr-[25px]">
        <path d="M1 1h18v14H1z" strokeWidth="1.600" /><path d="M4 6V4h3M13 4h3v2M16 10v2h-3M7 12H4v-2" strokeWidth="1.200" />
      </svg>
    </div>
  );
}

export default function App() {
  return (
    <div className="flex h-[970px] w-[1917px] flex-col overflow-hidden bg-[#f3f2f1] font-['Open_Sans','Noto_Sans',sans-serif]">
      <Tabs />
      <Ribbon />
      <div className="h-px shrink-0 bg-[#d8d6d4] shadow-[0_1px_4px_rgba(0,0,0,0.18)]" />
      <div className="flex h-[790px] shrink-0">
        <ViewRail />
        <div className="flex w-[1418px] shrink-0 flex-col">
          <RecoveryBar />
          <div className="flex h-[701px] flex-none">
            <Canvas />
            <FilterPane />
          </div>
          <PageTabs />
        </div>
        <VizPane />
        <DataPane />
      </div>
      <StatusBar />
    </div>
  );
}
